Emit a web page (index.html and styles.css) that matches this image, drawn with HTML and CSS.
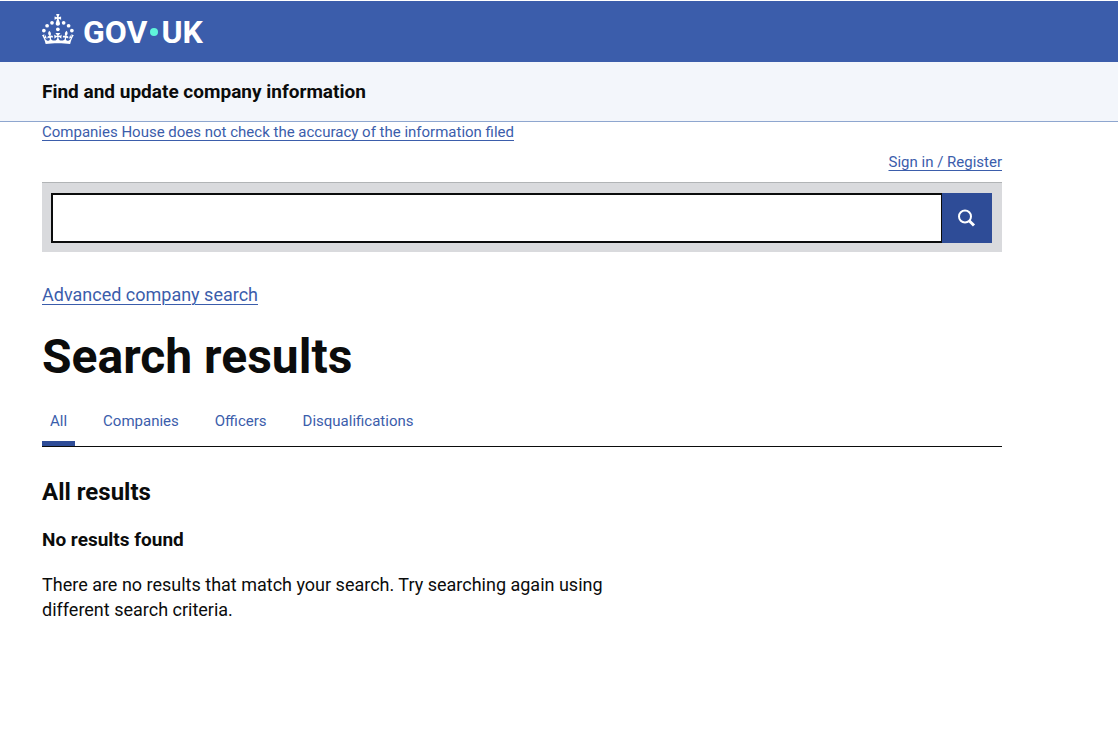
FILE: index.html
```html
<!DOCTYPE html>
<html lang="en">
<head>
<meta charset="utf-8">
<meta name="viewport" content="width=device-width, initial-scale=1">
<title>Search results - Find and update company information - GOV.UK</title>
<link rel="stylesheet" href="styles.css">
</head>
<body>
<header class="header">
  <div class="container">
    <a class="logo" href="#" aria-label="GOV.UK">
      <svg class="crown" viewBox="0 0 64 60" fill="currentColor" aria-hidden="true"><circle cx="20" cy="17.6" r="3.7"/><circle cx="10.2" cy="23.5" r="3.7"/><circle cx="3.7" cy="33.2" r="3.7"/><circle cx="31.7" cy="30.6" r="3.7"/><circle cx="43.3" cy="17.6" r="3.7"/><circle cx="53.2" cy="23.5" r="3.7"/><circle cx="59.7" cy="33.2" r="3.7"/><path d="M33.1,9.8c.2-.1.3-.3.5-.5l4.6,2.4v-6.8l-4.6,1.5c-.1-.2-.3-.3-.5-.5l1.9-5.9h-6.7l1.9,5.9c-.2.1-.3.3-.5.5l-4.6-1.5v6.8l4.6-2.4c.1.2.3.3.5.5l-2.6,8c-.9,2.8,1.2,5.7,4.1,5.7h0c3,0,5.1-2.9,4.1-5.7l-2.6-8ZM37,37.9s-3.4,3.8-4.1,6.1c2.2,0,4.2-.5,6.4-2.8l-.7,8.5c-2-2.8-4.4-4.1-5.7-3.8.1,3.1.5,6.7,5.8,7.2,3.7.3,6.7-1.5,7-3.8.4-2.6-2-4.3-3.7-1.6-1.4-4.5,2.4-6.1,4.9-3.2-1.9-4.5-1.8-7.7,2.4-10.9,3,4,2.6,7.3-1.2,11.1,2.4-1.3,6.2,0,4,4.6-1.2-2.8-3.7-2.2-4.2.2-.3,1.7.7,3.7,3,4.2,1.9.3,4.7-.9,7-5.9-1.3,0-2.4.7-3.9,1.7l2.4-8c.6,2.3,1.4,3.7,2.2,4.5.6-1.6.5-2.8,0-5.3l5,1.8c-2.6,3.6-5.2,8.7-7.3,17.5-7.4-1.1-15.7-1.7-24.5-1.7h0c-8.8,0-17.1.6-24.5,1.7-2.1-8.9-4.7-13.9-7.3-17.5l5-1.8c-.5,2.5-.6,3.7,0,5.3.8-.8,1.6-2.3,2.2-4.5l2.4,8c-1.5-1-2.6-1.7-3.9-1.7,2.3,5,5.2,6.2,7,5.9,2.3-.4,3.3-2.4,3-4.2-.5-2.4-3-3.1-4.2-.2-2.2-4.6,1.6-6,4-4.6-3.7-3.7-4.2-7.1-1.2-11.1,4.2,3.2,4.3,6.4,2.4,10.9,2.5-2.8,6.3-1.3,4.9,3.2-1.8-2.7-4.1-1-3.7,1.6.3,2.3,3.3,4.1,7,3.8,5.4-.5,5.7-4.2,5.8-7.2-1.3-.2-3.7,1-5.7,3.8l-.7-8.5c2.2,2.3,4.2,2.7,6.4,2.8-.7-2.3-4.1-6.1-4.1-6.1h10.6Z"/></svg>
      <span class="wordmark"><span>GOV</span><span class="dot"></span><span>UK</span></span>
    </a>
  </div>
</header>
<div class="service">
  <div class="container"><a class="service-name" href="#">Find and update company information</a></div>
</div>
<div class="container">
  <p class="notice"><a class="link" href="#">Companies House does not check the accuracy of the information filed</a></p>
  <nav class="account" aria-label="Account"><a class="link" href="#">Sign in / Register</a></nav>
  <main>
    <form class="search" role="search">
      <input class="search-input" type="search" aria-label="Search companies and officers">
      <button class="search-button" type="submit" aria-label="Search">
        <svg class="search-icon" viewBox="0 0 18 18" fill="none" stroke="currentColor" aria-hidden="true"><circle cx="7" cy="7.5" r="6" stroke-width="2"/><path d="M11.2 11.7 16 16.5" stroke-width="3"/></svg>
      </button>
    </form>
    <p class="advanced"><a class="link" href="#">Advanced company search</a></p>
    <h1 class="title">Search results</h1>
    <nav class="tabs" aria-label="Result type">
      <a class="tab tab-current" href="#" aria-current="page">All</a>
      <a class="tab" href="#">Companies</a>
      <a class="tab" href="#">Officers</a>
      <a class="tab" href="#">Disqualifications</a>
    </nav>
    <h2 class="subtitle">All results</h2>
    <h3 class="empty-title">No results found</h3>
    <p class="empty-text">There are no results that match your search. Try searching again using different search criteria.</p>
  </main>
</div>
</body>
</html>
```
FILE: styles.css
```css
* { box-sizing: border-box; }
body { margin: 0; background: #fff; color: #0b0c0c; font-family: Roboto, "Liberation Sans", sans-serif; }
h1, h2, h3, p { margin: 0; }
.container { max-width: 1044px; padding: 0 42px; }
.header { margin-top: 1px; padding: 13px 0 17px; background: #3b5dab; }
.logo { display: flex; gap: 9px; width: max-content; height: 31px; color: #fff; text-decoration: none; }
.crown { width: 32px; height: 30px; }
.wordmark { display: flex; align-items: center; gap: 3px; padding-top: 5px; font-size: 32px; font-weight: 700; line-height: 31px; }
.dot { width: 8px; height: 8px; border-radius: 50%; background: #5ff5da; }
.service { padding: 17px 0; border-bottom: 1px solid #8ea6cf; background: #f3f6fb; }
.service-name { display: block; color: #0b0c0c; font-size: 19px; font-weight: 700; line-height: 25px; text-decoration: none; }
.link { color: #3b5dab; text-decoration: underline; text-decoration-thickness: 1px; text-underline-offset: 3px; }
.notice { font-size: 15px; line-height: 20px; }
.account { padding: 10px 0; font-size: 15px; line-height: 20px; text-align: right; }
.search { display: flex; padding: 10px 10px 9px 9px; border-top: 1px solid #b1b4b6; background: #d9dadd; }
.search-input { flex: 1; min-width: 0; height: 50px; padding: 5px 10px; border: 2px solid #0b0c0c; border-right-width: 1px; border-radius: 0; background: #fff; font: inherit; font-size: 18px; appearance: none; }
.search-button { display: grid; place-items: center; width: 50px; padding: 0; border: 0; background: #2e4c97; color: #fff; }
.search-icon { width: 18px; height: 18px; }
.advanced { padding-top: 30px; font-size: 18px; line-height: 25px; }
.title { padding: 25px 0 29px; font-size: 48px; font-weight: 700; line-height: 50px; }
.tabs { display: flex; gap: 20px; border-bottom: 1px solid #0b0c0c; }
.tab { padding: 0 8px 10px; border-bottom: 5px solid transparent; color: #3b5dab; font-size: 15px; line-height: 20px; text-decoration: none; }
.tab-current { border-color: #2e4c97; }
.subtitle { padding: 30px 0 20px; font-size: 24px; line-height: 30px; }
.empty-title { font-size: 19px; line-height: 25px; }
.empty-text { max-width: 600px; padding-top: 20px; font-size: 18px; line-height: 25px; }
```
